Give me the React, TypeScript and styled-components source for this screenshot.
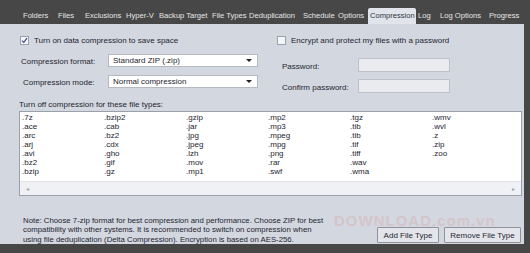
import styled, { createGlobalStyle } from "styled-components";

const GlobalStyle = createGlobalStyle`
  body {
    margin: 0;
    font-family: "Liberation Sans", Arial, sans-serif;
  }
`;

const Window = styled.div`
  width: 530px;
  height: 253px;
  background: #474747;
  display: flex;
  flex-direction: column;
  overflow: hidden;
  position: relative;
`;

const TabBar = styled.div`
  height: 24px;
  display: flex;
  align-items: flex-end;
  padding-left: 21px;
  box-sizing: border-box;
`;

const Tab = styled.div<{ $active?: boolean; $w: number }>`
  width: ${(p) => p.$w}px;
  height: 16px;
  line-height: 16px;
  padding-left: 2px;
  box-sizing: border-box;
  font-size: 7.6px;
  color: ${(p) => (p.$active ? "#2c3440" : "#e6e6e6")};
  background: ${(p) => (p.$active ? "#e1e4eb" : "transparent")};
  border-radius: 2px 2px 0 0;
  white-space: nowrap;
`;

const Body = styled.div`
  display: flex;
  height: 220px;
`;

const Panel = styled.div`
  width: 524px;
  background: #d3d7e0;
  box-sizing: border-box;
  padding: 12px 0 0 19px;
  display: flex;
  flex-direction: column;
  color: #1e2530;
  font-size: 8px;
`;

const TopArea = styled.div`
  display: flex;
`;

const LeftCol = styled.div`
  width: 257px;
  display: flex;
  flex-direction: column;
`;

const RightCol = styled.div`
  display: flex;
  flex-direction: column;
`;

const CheckRow = styled.label`
  display: flex;
  align-items: center;
  gap: 5px;
  height: 9px;
  margin-left: 1px;
  white-space: nowrap;
`;

const Box = styled.span`
  width: 7px;
  height: 7px;
  border: 1px solid #9ca2ad;
  background: #f4f5f8;
  display: flex;
  align-items: center;
  justify-content: center;
`;

const FieldRow = styled.div<{ $top: number; $indent?: number }>`
  display: flex;
  align-items: center;
  margin-top: ${(p) => p.$top}px;
  padding-left: ${(p) => p.$indent ?? 0}px;
`;

const FieldLabel = styled.span<{ $w: number }>`
  width: ${(p) => p.$w}px;
  white-space: nowrap;
  padding-top: 2px;
`;

const Select = styled.div`
  width: 150px;
  height: 13px;
  background: #fff;
  border: 1px solid #b4b9c2;
  box-sizing: border-box;
  display: flex;
  align-items: center;
  justify-content: space-between;
  padding: 0 5px 0 4px;
`;

const Caret = styled.span`
  width: 0;
  height: 0;
  border-left: 3px solid transparent;
  border-right: 3px solid transparent;
  border-top: 3px solid #222;
`;

const TextInput = styled.div`
  width: 92px;
  height: 14px;
  background: #e9ebef;
  border: 1px solid #bcc1c9;
  box-sizing: border-box;
`;

const SectionTitle = styled.div`
  margin-top: 7px;
  height: 9px;
  line-height: 9px;
  white-space: nowrap;
`;

const ListBox = styled.div`
  margin-top: 2px;
  width: 503px;
  height: 86px;
  background: #fff;
  border: 1px solid #9aa1ab;
  box-sizing: border-box;
  display: flex;
  flex-direction: column;
`;

const ListGrid = styled.div`
  flex: 1;
  display: grid;
  grid-template-columns: repeat(6, 82px);
  grid-template-rows: repeat(7, 9px);
  grid-auto-flow: column;
  padding: 1px 0 0 2px;
  font-size: 8px;
  line-height: 9px;
`;

const HScroll = styled.div`
  height: 13px;
  background: #f0f1f4;
  border-top: 1px solid #e1e3e8;
  display: flex;
  align-items: center;
  justify-content: space-between;
  padding: 0 6px;
  color: #a0a4ab;
  font-size: 6px;
`;

const Footer = styled.div`
  display: flex;
  align-items: flex-end;
  margin-top: 20px;
`;

const Note = styled.div`
  width: 352px;
  padding-left: 4px;
  font-size: 7.8px;
  line-height: 9.5px;
  white-space: nowrap;
`;

const Buttons = styled.div`
  display: flex;
  gap: 5px;
  margin-left: 2px;
  margin-bottom: 1px;
`;

const Button = styled.button<{ $w: number }>`
  width: ${(p) => p.$w}px;
  height: 16px;
  padding: 0;
  background: #e3e5ea;
  border: 1px solid #8e939b;
  border-radius: 1px;
  font-family: inherit;
  font-size: 8px;
  color: #1e2530;
`;

const RightEdge = styled.div`
  flex: 1;
  background: #474747;
`;

const Watermark = styled.div`
  position: absolute;
  left: 334px;
  top: 212px;
  font-size: 15px;
  font-weight: bold;
  letter-spacing: 1px;
  color: rgba(220, 150, 140, 0.3);
  pointer-events: none;
  white-space: nowrap;
`;

const tabs: [string, number][] = [
  ["Folders", 35],
  ["Files", 27],
  ["Exclusions", 41],
  ["Hyper-V", 33],
  ["Backup Target", 53],
  ["File Types", 37],
  ["Deduplication", 54],
  ["Schedule", 35],
  ["Options", 32],
  ["Compression", 48],
  ["Log", 22],
  ["Log Options", 49],
  ["Progress", 31],
];

const fileTypes = [
  ".7z", ".ace", ".arc", ".arj", ".avi", ".bz2", ".bzip",
  ".bzip2", ".cab", ".bz2", ".cdx", ".gho", ".gif", ".gz",
  ".gzip", ".jar", ".jpg", ".jpeg", ".lzh", ".mov", ".mp1",
  ".mp2", ".mp3", ".mpeg", ".mpg", ".png", ".rar", ".swf",
  ".tgz", ".tib", ".tib", ".tif", ".tiff", ".wav", ".wma",
  ".wmv", ".wvl", ".z", ".zip", ".zoo",
];

const Check = () => (
  <svg width="7" height="7" viewBox="0 0 7 7">
    <path d="M1 3.6 L2.8 5.4 L6 1.2" fill="none" stroke="#3a4a8c" strokeWidth="1.2" />
  </svg>
);

export default function App() {
  return (
    <Window>
      <GlobalStyle />
      <TabBar>
        {tabs.map(([t, w]) => (
          <Tab key={t} $w={w} $active={t === "Compression"}>
            {t}
          </Tab>
        ))}
      </TabBar>
      <Body>
        <Panel>
          <TopArea>
            <LeftCol>
              <CheckRow>
                <Box>
                  <Check />
                </Box>
                Turn on data compression to save space
              </CheckRow>
              <FieldRow $top={9} $indent={2}>
                <FieldLabel $w={87}>Compression format:</FieldLabel>
                <Select>
                  Standard ZIP (.zip)
                  <Caret />
                </Select>
              </FieldRow>
              <FieldRow $top={8} $indent={4}>
                <FieldLabel $w={85}>Compression mode:</FieldLabel>
                <Select>
                  Normal compression
                  <Caret />
                </Select>
              </FieldRow>
            </LeftCol>
            <RightCol>
              <CheckRow>
                <Box />
                Encrypt and protect my files with a password
              </CheckRow>
              <FieldRow $top={13} $indent={6}>
                <FieldLabel $w={76}>Password:</FieldLabel>
                <TextInput />
              </FieldRow>
              <FieldRow $top={7} $indent={6}>
                <FieldLabel $w={76}>Confirm password:</FieldLabel>
                <TextInput />
              </FieldRow>
            </RightCol>
          </TopArea>
          <SectionTitle>Turn off compression for these file types:</SectionTitle>
          <ListBox>
            <ListGrid>
              {fileTypes.map((f, i) => (
                <span key={i}>{f}</span>
              ))}
            </ListGrid>
            <HScroll>
              <span>◂</span>
              <span>▸</span>
            </HScroll>
          </ListBox>
          <Footer>
            <Note>
              Note: Choose 7-zip format for best compression and performance. Choose ZIP for best
              <br />
              compatibility with other systems. It is recommended to switch on compression when
              <br />
              using file deduplication (Delta Compression). Encryption is based on AES-256.
            </Note>
            <Buttons>
              <Button $w={62}>Add File Type</Button>
              <Button $w={77}>Remove File Type</Button>
            </Buttons>
          </Footer>
        </Panel>
        <RightEdge />
      </Body>
      <Watermark>DOWNLOAD.com.vn</Watermark>
    </Window>
  );
}
